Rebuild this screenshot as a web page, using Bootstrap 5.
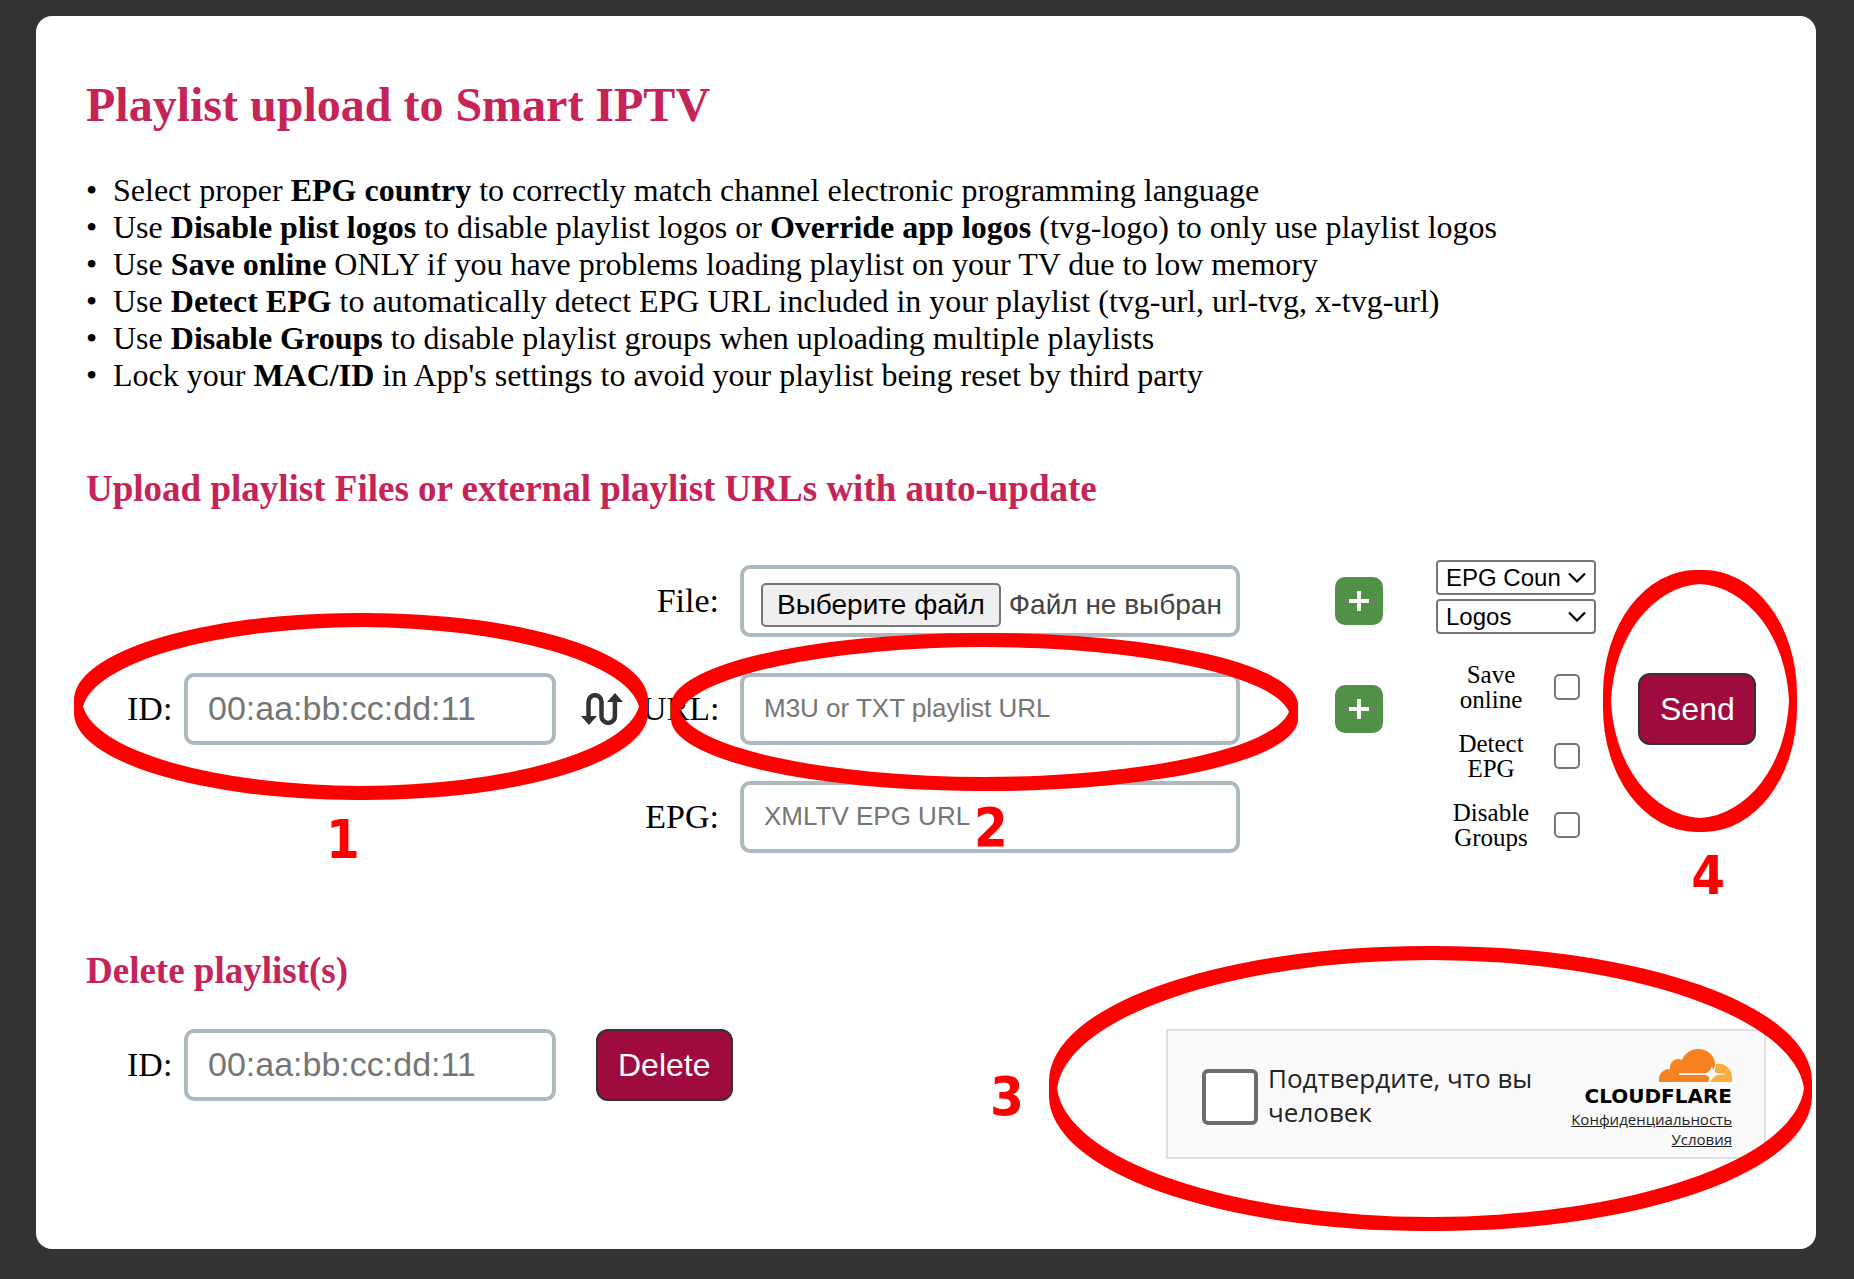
<!DOCTYPE html>
<html lang="en">
<head>
<meta charset="utf-8">
<meta name="viewport" content="width=device-width, initial-scale=1">
<title>Playlist upload to Smart IPTV</title>
<link href="https://cdn.jsdelivr.net/npm/bootstrap@5.3.0/dist/css/bootstrap.min.css" rel="stylesheet">
<style>
  body { background: #333; color: #000; font-family: "Liberation Serif", "Times New Roman", serif; font-size: 32px; }
  .panel { margin: 16px 38px 30px 36px; padding: 61px 60px 90px 50px; background: #fff; border-radius: 16px; }
  h1, h2 { color: #c62457; font-weight: 700; margin: 0; }
  h1 { font-size: 48px; line-height: 56px; }
  h2 { font-size: 37px; line-height: 44px; }
  .tips { margin: 39px 0 73px; line-height: 37px; }
  .tips li::before { content: "•"; display: inline-block; width: 27px; }
  .upload-row { margin: 49px 0 91px; padding-left: 41px; }
  .delete-row { margin-top: 36px; padding-left: 41px; }
  .field-label { font-size: 34px; line-height: 40px; }
  .id-label { width: 57px; }
  .source-label { width: 98px; padding-right: 21px; text-align: right; }
  .field { height: 72px; min-width: 0; border: 4px solid #adb9c1; border-radius: 10px; padding: 0 20px 2px; background: #fff; color: #444; font-family: "Liberation Sans", Arial, sans-serif; font-size: 26px; }
  .field::placeholder { color: #757575; opacity: 1; }
  .id-field { width: 372px; font-size: 34px; }
  .swap { width: 42px; height: 32px; margin: 0 19px 0 25px; }
  .swap svg, .add svg, .step svg { display: block; }
  .sources { gap: 36px; min-width: 0; }
  .pick { height: 44px; padding: 0 14px; line-height: 40px; border: 2px solid #767676; border-radius: 5px; background: #efefef; color: #000; }
  .file-box { font-size: 28px; line-height: 40px; padding: 7px 0 0 17px; gap: 8px; white-space: nowrap; }
  .add { width: 48px; height: 48px; margin: 0 53px 0 95px; border-radius: 10px; background: #528f48; }
  .options { width: 160px; padding-bottom: 8px; gap: 19px; }
  .choice { height: 35px; padding: 0 34px 0 8px; border: 2px solid #767676; border-radius: 4px; font: 24px/30px "Liberation Sans", Arial, sans-serif; color: #000; text-overflow: clip;
    background-image: url("data:image/svg+xml,%3Csvg xmlns='http://www.w3.org/2000/svg' viewBox='0 0 18 11'%3E%3Cpath d='M1 1.5l8 8 8-8' fill='none' stroke='%23000' stroke-width='2.2'/%3E%3C/svg%3E"); background-size: 18px 11px; background-position: right 8px center; }
  .choices { gap: 4px; margin-bottom: 9px; }
  .opt-label { width: 110px; font-size: 25px; line-height: 25px; text-align: center; }
  .tick { appearance: none; width: 26px; height: 26px; border: 2px solid #767676; border-radius: 5px; background: #fff; margin: 0; }
  .action { height: 72px; padding: 0 20px; border: 2px solid #333; border-radius: 12px; background: #9f0a3f; color: #fff; font: 32px/40px "Liberation Sans", Arial, sans-serif; }
  .send { width: 118px; margin-left: 42px; }
  .delete { margin-left: 40px; }
  .verify { width: 600px; height: 130px; margin-right: -10px; padding: 6px 32px 0 34px; border: 2px solid #e0e0e0; background: #fafafa; color: #232323; font-family: "Open Sans", "Noto Sans", sans-serif; }
  .verify .tick { width: 56px; height: 56px; border: 4px solid #6d6d6d; border-radius: 6px; }
  .verify-text { width: 290px; margin-left: 10px; padding-bottom: 5px; font-size: 26px; line-height: 34px; }
  .verify-brand { padding-top: 3px; }
  .brand { margin-bottom: 3px; font: 700 20px/20px "DejaVu Sans", Verdana, sans-serif; color: #000; }
  .verify a { color: #232323; font-size: 15px; line-height: 20px; }
  .step { position: absolute; pointer-events: none; color: #f00; z-index: 2; }
  .digit { font: 700 54px/54px "DejaVu Sans Condensed", "DejaVu Sans", Tahoma, sans-serif; }
  .ring-1 { left: 38px; top: 597px; }
  .ring-2 { left: 635px; top: 617px; }
  .ring-3 { right: 4px; top: 930px; }
  .ring-4 { right: 19px; top: 554px; }
  .digit-1 { left: 290px; top: 797px; }
  .digit-2 { left: 938px; top: 785px; }
  .digit-3 { left: 954px; top: 1054px; }
  .digit-4 { right: 91px; top: 833px; }
</style>
</head>
<body>
<main class="panel position-relative">
  <h1>Playlist upload to Smart IPTV</h1>
  <ul class="tips list-unstyled">
    <li>Select proper <b>EPG country</b> to correctly match channel electronic programming language</li>
    <li>Use <b>Disable plist logos</b> to disable playlist logos or <b>Override app logos</b> (tvg-logo) to only use playlist logos</li>
    <li>Use <b>Save online</b> ONLY if you have problems loading playlist on your TV due to low memory</li>
    <li>Use <b>Detect EPG</b> to automatically detect EPG URL included in your playlist (tvg-url, url-tvg, x-tvg-url)</li>
    <li>Use <b>Disable Groups</b> to disable playlist groups when uploading multiple playlists</li>
    <li>Lock your <b>MAC/ID</b> in App's settings to avoid your playlist being reset by third party</li>
  </ul>

  <h2>Upload playlist Files or external playlist URLs with auto-update</h2>
  <form class="upload-row d-flex align-items-center">
    <label class="field-label id-label flex-shrink-0" for="mac">ID:</label>
    <input class="field id-field flex-shrink-0" id="mac" type="text" placeholder="00:aa:bb:cc:dd:11">
    <button class="swap btn border-0 p-0 flex-shrink-0" type="button" aria-label="Switch ID format">
      <svg width="42" height="32" viewBox="0 0 42 32"><path d="M7.5 24V8.700a6.500 6.500 0 0 1 13 0V23.200a6.700 6.700 0 0 0 13.400 0V8" fill="none" stroke="#333" stroke-width="4.500"/><path d="M0 23h16l-8 9zM26 9h16l-8-9z" fill="#333"/></svg>
    </button>

    <div class="sources d-flex flex-column flex-fill">
      <div class="d-flex align-items-center">
        <label class="field-label source-label flex-shrink-0" for="file">File:</label>
        <div class="field file-box d-flex align-items-center flex-fill">
          <input class="visually-hidden" id="file" type="file">
          <label class="pick" for="file">Выберите файл</label>
          <span>Файл не выбран</span>
        </div>
        <button class="add btn border-0 p-0 flex-shrink-0" type="button" aria-label="Add file"><svg width="48" height="48" viewBox="0 0 48 48"><path d="M14 24h20M24 14v20" stroke="#fff" stroke-width="4"/></svg></button>
      </div>
      <div class="d-flex align-items-center">
        <label class="field-label source-label flex-shrink-0" for="url">URL:</label>
        <input class="field flex-fill" id="url" type="text" placeholder="M3U or TXT playlist URL">
        <button class="add btn border-0 p-0 flex-shrink-0" type="button" aria-label="Add URL"><svg width="48" height="48" viewBox="0 0 48 48"><path d="M14 24h20M24 14v20" stroke="#fff" stroke-width="4"/></svg></button>
      </div>
      <div class="d-flex align-items-center">
        <label class="field-label source-label flex-shrink-0" for="epg">EPG:</label>
        <input class="field flex-fill" id="epg" type="text" placeholder="XMLTV EPG URL">
        <span class="add invisible flex-shrink-0"></span>
      </div>
    </div>

    <div class="options d-flex flex-column flex-shrink-0">
      <div class="choices d-flex flex-column">
        <select class="form-select choice" aria-label="EPG Country"><option>EPG Country</option></select>
        <select class="form-select choice" aria-label="Logos"><option>Logos</option></select>
      </div>
      <div class="d-flex align-items-center"><label class="opt-label" for="save">Save<br>online</label><input class="tick ms-2" id="save" type="checkbox"></div>
      <div class="d-flex align-items-center"><label class="opt-label" for="detect">Detect<br>EPG</label><input class="tick ms-2" id="detect" type="checkbox"></div>
      <div class="d-flex align-items-center"><label class="opt-label" for="groups">Disable<br>Groups</label><input class="tick ms-2" id="groups" type="checkbox"></div>
    </div>
    <button class="action send flex-shrink-0" type="submit">Send</button>
  </form>

  <h2>Delete playlist(s)</h2>
  <form class="delete-row d-flex align-items-start">
    <div class="d-flex align-items-center">
      <label class="field-label id-label" for="mac-del">ID:</label>
      <input class="field id-field" id="mac-del" type="text" placeholder="00:aa:bb:cc:dd:11">
      <button class="action delete" type="submit">Delete</button>
    </div>
    <div class="verify d-flex align-items-center ms-auto">
      <input class="tick flex-shrink-0" id="human" type="checkbox">
      <label class="verify-text" for="human">Подтвердите, что вы человек</label>
      <div class="verify-brand d-flex flex-column align-items-end ms-auto">
        <svg width="73" height="33" viewBox="0 0 73 33"><path d="M0 33c-1-8 4-13 11-13-1-7 6-12 12-9C26 4 32 0 39 0c9 0 16 6 17 14 0 4-2 6-2 9l-4 2c2 2 0 6-1 8z" fill="#f6821f"/><path d="M57 15c10-2 18 7 16 18H51c1-3 3-5 4-7z" fill="#fbad41"/><path d="M20 24.200h26q5-1 7-7 1 6 6 7l7 .3v1l-7 .5q-5 1-7 7-1-6-6-7H20z" fill="#fafafa"/></svg>
        <span class="brand mt-1">CLOUDFLARE</span>
        <a href="#">Конфиденциальность</a>
        <a href="#">Условия</a>
      </div>
    </div>
  </form>

  <!-- Step markers: rings drawn with a flat 8 by 14 nib -->
  <div class="step ring-1"><svg width="574" height="187" fill="currentColor" fill-rule="evenodd"><path d="M0 87A283 87 0 0 1 283 0H291A283 87 0 0 1 574 87V100A283 87 0 0 1 291 187H283A283 87 0 0 1 0 100ZM9 93.500A283 87 0 0 0 287 173A283 87 0 0 0 565 93.500A283 87 0 0 0 287 14A283 87 0 0 0 9 93.500Z"/></svg></div>
  <div class="step ring-2"><svg width="627" height="158" fill="currentColor" fill-rule="evenodd"><path d="M0 72A309 72 0 0 1 309 0H318A309 72 0 0 1 627 72V86A309 72 0 0 1 318 158H309A309 72 0 0 1 0 86ZM9 79A309 72 0 0 0 313.500 144A309 72 0 0 0 618 79A309 72 0 0 0 313.500 14A309 72 0 0 0 9 79Z"/></svg></div>
  <div class="step ring-3"><svg width="763" height="285" fill="currentColor" fill-rule="evenodd"><path d="M0 135A377 135 0 0 1 377 0H386A377 135 0 0 1 763 135V150A377 135 0 0 1 386 285H377A377 135 0 0 1 0 150ZM8 142.500A377 135 0 0 0 381.500 271A377 135 0 0 0 755 142.500A377 135 0 0 0 381.500 14A377 135 0 0 0 8 142.500Z"/></svg></div>
  <div class="step ring-4"><svg width="194" height="262" fill="currentColor" fill-rule="evenodd"><path d="M0 124A93 124 0 0 1 93 0H101A93 124 0 0 1 194 124V138A93 124 0 0 1 101 262H93A93 124 0 0 1 0 138ZM8 131A93 124 0 0 0 97 248A93 124 0 0 0 186 131A93 124 0 0 0 97 14A93 124 0 0 0 8 131Z"/></svg></div>
  <span class="step digit digit-1">1</span>
  <span class="step digit digit-2">2</span>
  <span class="step digit digit-3">3</span>
  <span class="step digit digit-4">4</span>
</main>
<script src="https://cdn.jsdelivr.net/npm/bootstrap@5.3.0/dist/js/bootstrap.bundle.min.js"></script>
</body>
</html>
